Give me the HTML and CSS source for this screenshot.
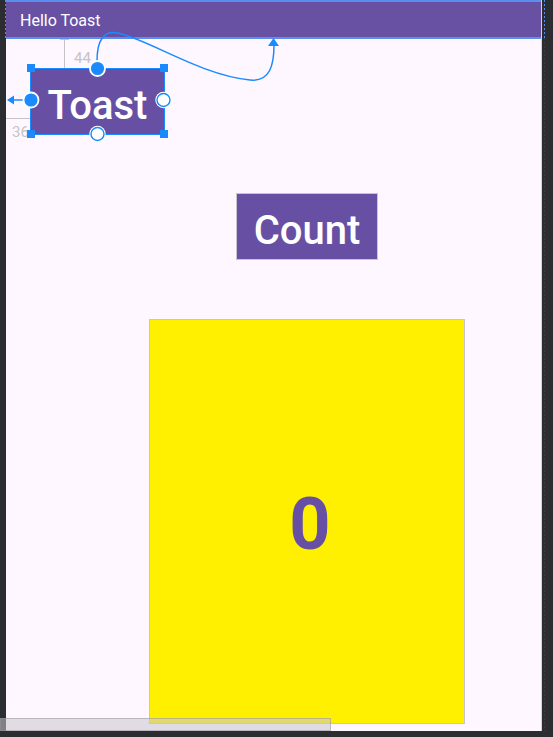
FILE: index.html
```html
<!DOCTYPE html>
<html>
<head>
<meta charset="utf-8">
<link rel="stylesheet" href="styles.css">
</head>
<body>
<div class="frame">
  <div class="device">
    <header class="toolbar">Hello Toast</header>
    <main class="content">
      <button class="btn btn-toast">Toast</button>
      <button class="btn btn-count">Count</button>
      <div class="counter">0</div>
    </main>
  </div>
  <svg class="overlay" width="553" height="737" viewBox="0 0 553 737">
    <defs>
      <clipPath id="leftclip"><rect x="0" y="0" width="30" height="737"/></clipPath>
    </defs>
    <line x1="5.5" y1="0" x2="5.5" y2="38" stroke="#4d8ef0" stroke-width="1" stroke-dasharray="2 2"/>
    <line x1="544.5" y1="0" x2="544.5" y2="38" stroke="#4d8ef0" stroke-width="1" stroke-dasharray="2 2"/>
    <line x1="544.5" y1="38" x2="544.5" y2="731" stroke="#3a3c40" stroke-width="1" stroke-dasharray="2 2"/>
    <!-- margin indicators -->
    <line x1="64.5" y1="39" x2="64.5" y2="68" stroke="#c4c4c4" stroke-width="1"/>
    <line x1="60" y1="39.5" x2="69" y2="39.5" stroke="#c4c4c4" stroke-width="1"/>
    <line x1="60" y1="68.5" x2="69" y2="68.5" stroke="#c4c4c4" stroke-width="1"/>
    <text class="dim" x="74" y="63">44</text>
    <line x1="6" y1="118.5" x2="30" y2="118.5" stroke="#c4c4c4" stroke-width="1"/>
    <text class="dim" x="12" y="137" clip-path="url(#leftclip)">36</text>
    <!-- left constraint arrow -->
    <line x1="12" y1="100" x2="26" y2="100" stroke="#1c8aff" stroke-width="1.5"/>
    <polygon points="7,100 14,95.5 14,104.5" fill="#1c8aff"/>
    <!-- curve to toolbar -->
    <path d="M97,61 C97,40 104,30 118,33 C150,40 200,75 250,80 C270,82 274,65 274,45" fill="none" stroke="#1c8aff" stroke-width="1.5"/>
    <polygon points="273.5,38 268,46 279,46" fill="#1c8aff"/>
    <!-- selection -->
    <rect x="30.5" y="68.5" width="134" height="66" fill="none" stroke="#1c8aff" stroke-width="1"/>
    <rect x="27" y="64" width="8" height="8" fill="#1c8aff"/>
    <rect x="160" y="64" width="8" height="8" fill="#1c8aff"/>
    <rect x="27" y="130" width="8" height="8" fill="#1c8aff"/>
    <rect x="160" y="130" width="8" height="8" fill="#1c8aff"/>
    <circle cx="97.5" cy="68.5" r="7.5" fill="#1c8aff" stroke="#ffffff" stroke-width="1.8"/>
    <circle cx="31" cy="100" r="7.5" fill="#1c8aff" stroke="#ffffff" stroke-width="1.8"/>
    <circle cx="163.5" cy="100" r="8.2" fill="#ffffff"/>
    <circle cx="163.5" cy="100" r="6.5" fill="#ffffff" stroke="#1c8aff" stroke-width="1.4"/>
    <circle cx="97.5" cy="134" r="8.2" fill="#ffffff"/>
    <circle cx="97.5" cy="134" r="6.5" fill="#ffffff" stroke="#1c8aff" stroke-width="1.4"/>
  </svg>
  <div class="hscroll"></div>
</div>
</body>
</html>
```

FILE: styles.css
```css
html, body {
  margin: 0;
  padding: 0;
  background: #2b2d30;
  width: 553px;
  height: 737px;
  overflow: hidden;
  font-family: Roboto, "Noto Sans", sans-serif;
}

.frame {
  position: relative;
  width: 553px;
  height: 737px;
}

.device {
  margin-left: 6px;
  width: 535px;
  height: 731px;
  background: #fef7ff;
  border-right: 1px solid #d4d0d8;
  display: flex;
  flex-direction: column;
  overflow: hidden;
}

.toolbar {
  box-sizing: border-box;
  height: 39px;
  flex: none;
  background: #6851a3;
  border-top: 2px solid #5a8ff0;
  border-bottom: 2px solid #5a8ff0;
  color: #ffffff;
  font-size: 16px;
  line-height: 35px;
  padding-left: 14px;
  padding-top: 1px;
}

.content {
  display: flex;
  flex-direction: column;
  align-items: flex-start;
}

.btn {
  box-sizing: border-box;
  margin: 0;
  padding: 7px 0 0 0;
  background: #6750a4;
  color: #ffffff;
  font-family: Roboto, "Noto Sans", sans-serif;
  font-size: 40px;
  font-weight: 500;
  height: 67px;
  border-radius: 0;
  display: flex;
  align-items: center;
  justify-content: center;
}

.btn-toast {
  margin-top: 29px;
  margin-left: 24px;
  width: 135px;
  border: 1px solid #1c8aff;
}

.btn-count {
  margin-top: 58px;
  margin-left: 230px;
  width: 142px;
  border: 1px solid #cbc4cf;
}

.counter {
  box-sizing: border-box;
  margin-top: 59px;
  margin-left: 143px;
  width: 316px;
  height: 405px;
  background: #fff000;
  border: 1px solid #cac4d0;
  color: #6750a4;
  font-size: 72px;
  font-weight: 700;
  display: flex;
  align-items: center;
  justify-content: center;
  padding-left: 6px;
  padding-top: 6px;
}

.overlay {
  position: absolute;
  left: 0;
  top: 0;
}

.dim {
  font-family: Roboto, "Noto Sans", sans-serif;
  font-size: 15px;
  fill: #c4c4c4;
}

.hscroll {
  position: absolute;
  left: 0;
  top: 718px;
  width: 329px;
  height: 11px;
  background: rgba(200, 196, 204, 0.55);
  border: 1px solid rgba(150, 146, 154, 0.5);
}
```
